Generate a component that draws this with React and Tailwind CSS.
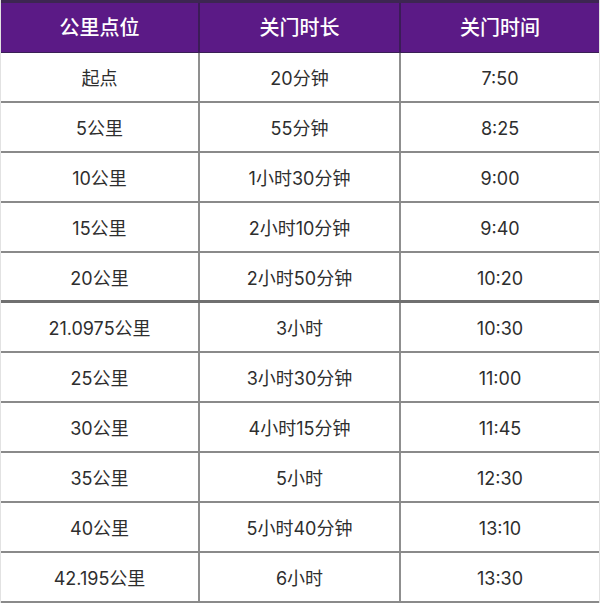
import React from 'react';

const rows = [
  ['起点', '20分钟', '7:50'],
  ['5公里', '55分钟', '8:25'],
  ['10公里', '1小时30分钟', '9:00'],
  ['15公里', '2小时10分钟', '9:40'],
  ['20公里', '2小时50分钟', '10:20'],
  ['21.0975公里', '3小时', '10:30'],
  ['25公里', '3小时30分钟', '11:00'],
  ['30公里', '4小时15分钟', '11:45'],
  ['35公里', '5小时', '12:30'],
  ['40公里', '5小时40分钟', '13:10'],
  ['42.195公里', '6小时', '13:30'],
];

export default function App() {
  return (
    <div
      className="w-[600px] h-[604px] bg-white overflow-hidden"
      style={{ fontFamily: 'Inter, "Noto Sans CJK SC", sans-serif' }}
    >
      <div className="border-l border-r border-[#e2e2e2]">
        {/* header */}
        <div className="grid grid-cols-[199px_201px_1fr] h-[53px] bg-[#5b1a86] border-t-[3px] border-[#3d2652] border-b border-b-[#3a1f55] text-white text-[20px] font-medium">
          <div className="flex items-center justify-center border-r-2 border-[#3b1c57]">公里点位</div>
          <div className="flex items-center justify-center border-r-2 border-[#3b1c57]">关门时长</div>
          <div className="flex items-center justify-center">关门时间</div>
        </div>
        {rows.map((r, i) => (
          <div
            key={i}
            className={`grid grid-cols-[199px_201px_1fr] h-[50px] text-[18px] text-[#2e2e2e] ${
              i === 4 ? 'border-b-[3px] border-[#707070]' : 'border-b-2 border-[#8a8a8a]'
            }`}
          >
            <div className="flex items-center justify-center pt-[3px] border-r-2 border-[#8f8f8f]">{r[0]}</div>
            <div className="flex items-center justify-center pt-[3px] border-r-2 border-[#8f8f8f]">{r[1]}</div>
            <div className="flex items-center justify-center pt-[3px]">{r[2]}</div>
          </div>
        ))}
      </div>
    </div>
  );
}
